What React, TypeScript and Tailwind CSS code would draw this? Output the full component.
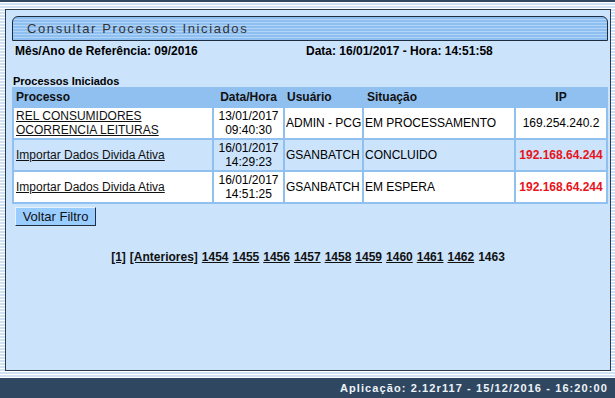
const rows = [
  {
    processo: ["REL CONSUMIDORES", "OCORRENCIA LEITURAS"],
    data: "13/01/2017",
    hora: "09:40:30",
    usuario: "ADMIN - PCG",
    situacao: "EM PROCESSAMENTO",
    ip: "169.254.240.2",
    ipAlert: false,
  },
  {
    processo: ["Importar Dados Divida Ativa"],
    data: "16/01/2017",
    hora: "14:29:23",
    usuario: "GSANBATCH",
    situacao: "CONCLUIDO",
    ip: "192.168.64.244",
    ipAlert: true,
  },
  {
    processo: ["Importar Dados Divida Ativa"],
    data: "16/01/2017",
    hora: "14:51:25",
    usuario: "GSANBATCH",
    situacao: "EM ESPERA",
    ip: "192.168.64.244",
    ipAlert: true,
  },
];

const pages = ["1454", "1455", "1456", "1457", "1458", "1459", "1460", "1461", "1462"];

export default function App() {
  return (
    <div className="w-[615px] h-[398px] flex flex-col overflow-hidden bg-[repeating-linear-gradient(to_bottom,#cfe1f2_0px,#cfe1f2_2px,#ffffff_2px,#ffffff_3px)] font-['Liberation_Sans',Arial,sans-serif] text-black">
      <div className="h-[2px] bg-[#2f4761]" />

      <div className="flex-1 pl-[5px] pr-[4px] pt-[7px] pb-[7px]">
        <div className="h-full border border-[#2b3b4c] bg-[#cbe3fb] pt-[6px]">
          {/* Barra de título */}
          <div className="ml-[6px] mr-[2px] h-[25px] border border-[#1e2d3d] rounded-tl-[6px] rounded-tr-[6px] bg-[repeating-linear-gradient(to_bottom,#8fbff1_0px,#8fbff1_2px,#b0d5f7_2px,#b0d5f7_3px)] pl-[14px] flex items-center">
            <span className="text-[13px] tracking-[1.6px] text-[#333]">Consultar Processos Iniciados</span>
          </div>

          {/* Referência */}
          <div className="mt-[3px] h-[14px] flex text-[12px] leading-[14px] font-bold">
            <span className="pl-[9px] w-[300px]">Mês/Ano de Referência: 09/2016</span>
            <span>Data: 16/01/2017 - Hora: 14:51:58</span>
          </div>

          <div className="mt-[17px] ml-[7px] h-[12px] text-[11px] leading-[12px] font-bold">Processos Iniciados</div>

          {/* Tabela */}
          <table className="ml-[6px] w-[596px] border-separate border-spacing-[2px] bg-[#90c0f0] text-[12px] table-fixed">
            <colgroup>
              <col className="w-[198px]" />
              <col className="w-[69px]" />
              <col className="w-[77px]" />
              <col className="w-[150px]" />
              <col className="w-[90px]" />
            </colgroup>
            <thead>
              <tr className="h-[17px] leading-[17px] font-bold text-[#111]">
                <th className="p-0 pl-[2px] text-left font-bold">Processo</th>
                <th className="p-0 text-center font-bold">Data/Hora</th>
                <th className="p-0 pl-[2px] text-left font-bold">Usuário</th>
                <th className="p-0 pl-[3px] text-left font-bold">Situação</th>
                <th className="p-0 text-center font-bold">IP</th>
              </tr>
            </thead>
            <tbody>
              {rows.map((r, i) => (
                <tr key={i} className={`h-[30px] leading-[14px] ${i % 2 === 1 ? "bg-[#cbe3fb]" : "bg-white"}`}>
                  <td className="p-0 pl-[2px] align-middle">
                    <a href="#" className="underline text-[#111]">
                      {r.processo.map((p, j) => (
                        <span key={j} className="block">{p}</span>
                      ))}
                    </a>
                  </td>
                  <td className="p-0 text-center align-middle">
                    <div>{r.data}</div>
                    <div>{r.hora}</div>
                  </td>
                  <td className="p-0 pl-[1px] align-middle whitespace-nowrap">{r.usuario}</td>
                  <td className="p-0 pl-[1px] align-middle whitespace-nowrap">{r.situacao}</td>
                  <td className={`p-0 text-center align-middle whitespace-nowrap ${r.ipAlert ? "text-[#e8131b] font-bold" : ""}`}>{r.ip}</td>
                </tr>
              ))}
            </tbody>
          </table>

          <button className="mt-[3px] ml-[9px] w-[81px] h-[19px] bg-[#99ccff] border border-t-[#e6f2ff] border-l-[#e6f2ff] border-b-[#1f2f40] border-r-[#1f2f40] text-[13px] leading-[17px] text-[#111]">
            Voltar Filtro
          </button>

          {/* Paginação */}
          <div className="mt-[22px] h-[14px] flex justify-center gap-[4px] text-[12px] leading-[14px] font-bold text-[#111]">
            <a href="#" className="underline">[1]</a>
            <a href="#" className="underline">[Anteriores]</a>
            {pages.map((p) => (
              <a key={p} href="#" className="underline">{p}</a>
            ))}
            <span>1463</span>
          </div>
        </div>
      </div>

      <div className="h-[20px] bg-[#2f4761] flex items-center justify-end pr-[7px]">
        <span className="text-[11px] font-bold tracking-[1.1px] text-[#eef3f8]">Aplicação: 2.12r117 - 15/12/2016 - 16:20:00</span>
      </div>
    </div>
  );
}
